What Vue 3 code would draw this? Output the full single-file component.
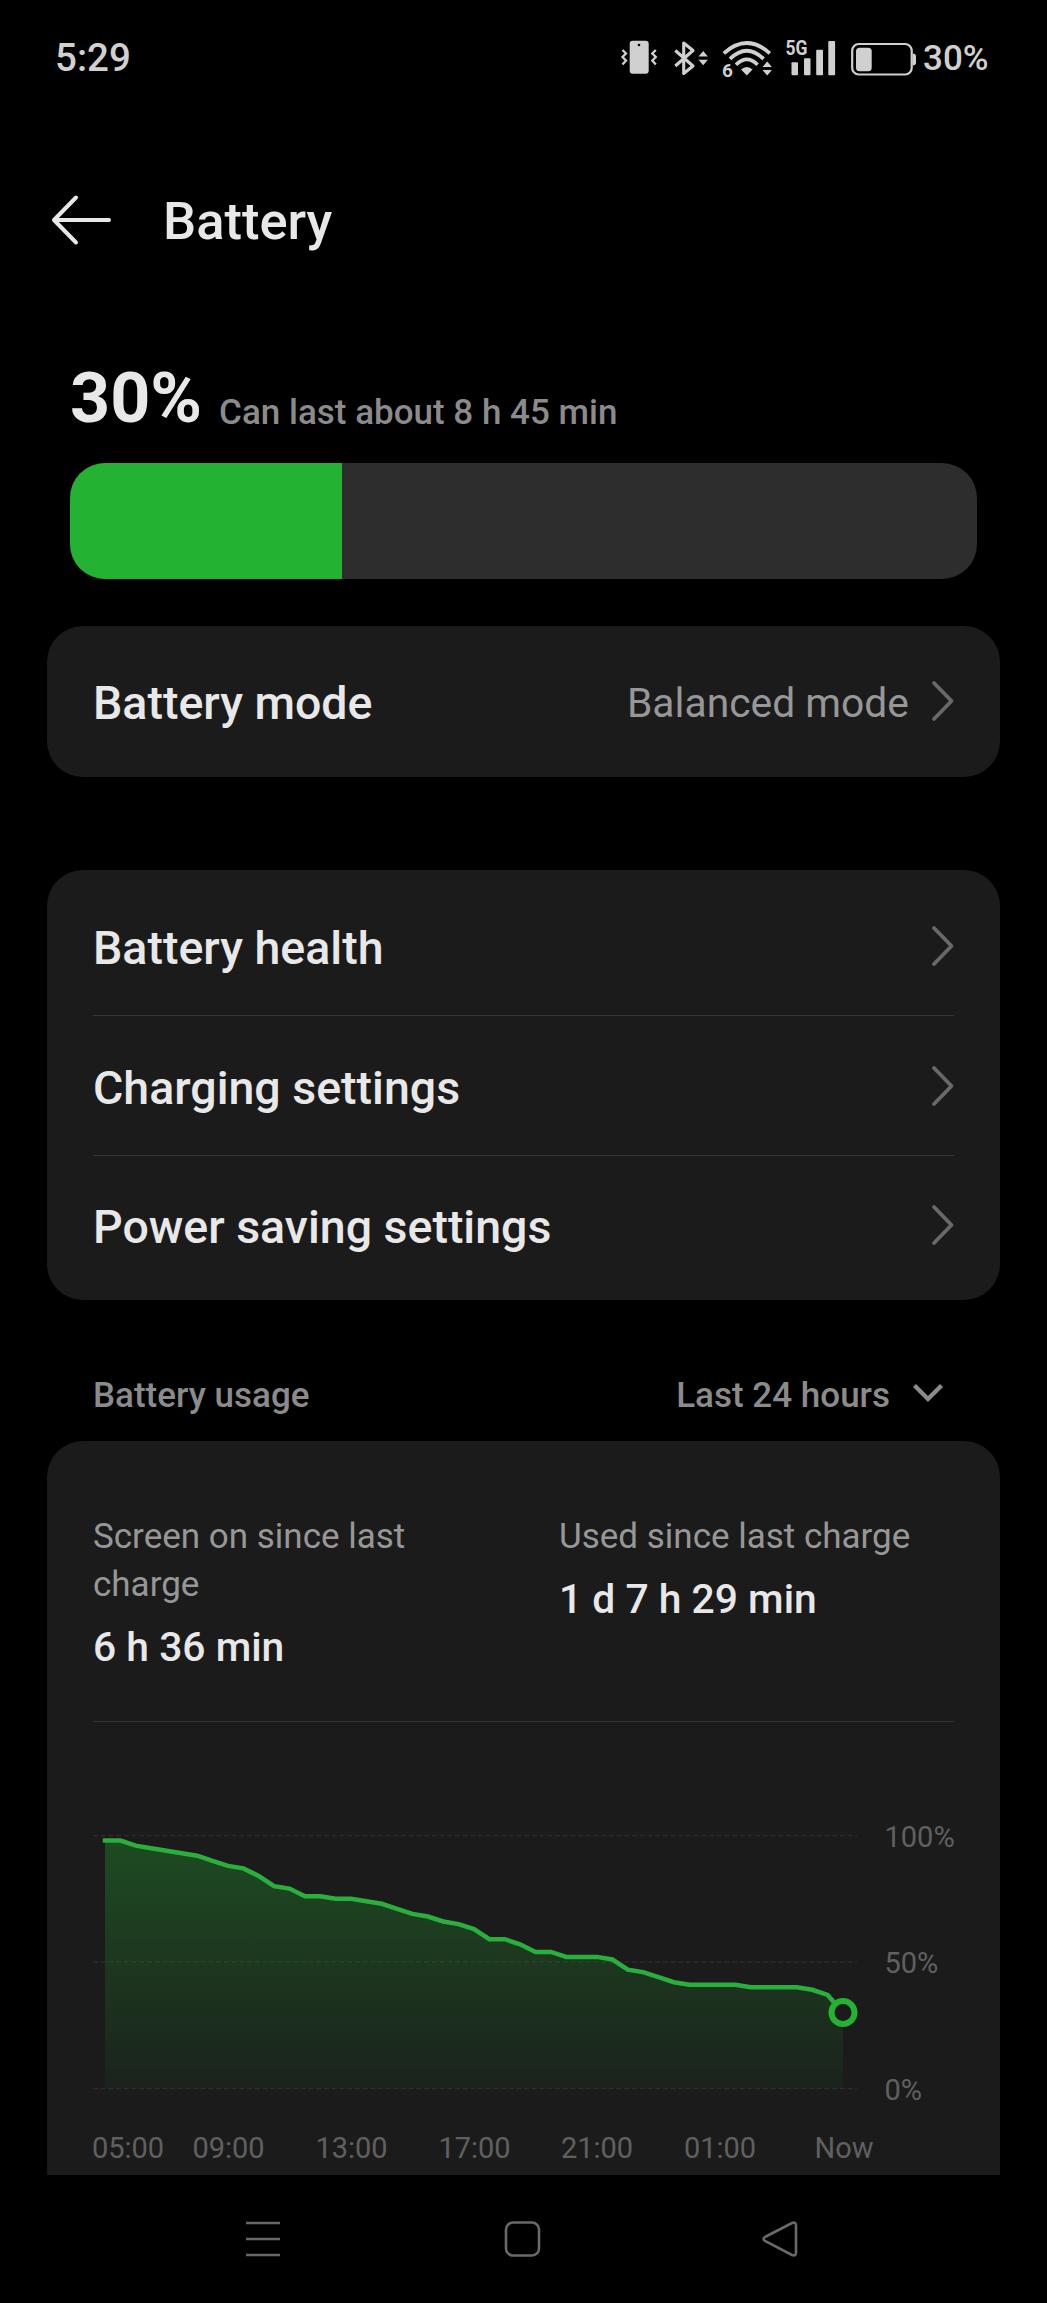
<script setup>
const level = 30;

const settings = ["Battery health", "Charging settings", "Power saving settings"];

const stats = [
  { label: "Screen on since last charge", value: "6 h 36 min" },
  { label: "Used since last charge", value: "1 d 7 h 29 min" }
];

// one reading every 30 minutes
const readings = [
  98, 98, 96, 95, 94, 93, 92, 90, 88, 87, 84, 80, 79, 76, 76, 75, 75, 74, 73, 71,
  69, 68, 66, 65, 63, 59, 59, 57, 54, 54, 52, 52, 52, 51, 47, 46, 44, 42, 41, 41,
  41, 41, 40, 40, 40, 40, 39, 37, 30
];

const chart = { left: 12, right: 750, top: 14.5, bottom: 267.5 };

const toX = (i) => chart.left + (i * (chart.right - chart.left)) / (readings.length - 1);
const toY = (v) => chart.bottom - (v * (chart.bottom - chart.top)) / 100;

const line = readings.map((v, i) => `${toX(i).toFixed(1)},${toY(v).toFixed(1)}`).join(" ");
const area = `${chart.left},${chart.bottom} ${line} ${chart.right},${chart.bottom}`;
const last = { x: toX(readings.length - 1), y: toY(readings[readings.length - 1]) };

const levels = [100, 50, 0];
const hours = [
  { text: "05:00", x: 35 },
  { text: "09:00", x: 135.5 },
  { text: "13:00", x: 258.5 },
  { text: "17:00", x: 381.5 },
  { text: "21:00", x: 504 },
  { text: "01:00", x: 627 },
  { text: "Now", x: 751 }
];
</script>

<template>
  <div class="screen">
    <div class="status-bar">
      <span class="time">5:29</span>
      <div class="status-icons">
        <svg width="39" height="40" viewBox="0 0 39 40">
          <rect x="8.7" y="2.8" width="19" height="33" rx="3" fill="#d0d0d0" />
          <circle cx="18" cy="7" r="1.3" fill="#000" />
          <path d="M1.5 12l3.5 3.5-3.5 3.5 3.5 3.5-3.5 4M34.8 12l-3.5 3.5 3.5 3.5-3.5 3.5 3.5 4" fill="none" stroke="#d0d0d0" stroke-width="2.3" />
        </svg>
        <svg width="38" height="40" viewBox="0 0 38 40">
          <path d="M3.3 12.5L21 28l-9.3 7.5V5L21 12.5 3.3 28" fill="none" stroke="#d0d0d0" stroke-width="3.1" stroke-linejoin="round" />
          <path d="M26.5 18.5l4.7-5.5 4.7 5.5zM26.5 21.7l4.7 5.5 4.7-5.5z" fill="#d0d0d0" />
        </svg>
        <svg width="52" height="40" viewBox="0 0 52 40">
          <g fill="none" stroke="#d0d0d0" stroke-width="3.7">
            <path d="M1.8 15.3Q24.8-5.3 47.8 15.3" />
            <path d="M8 20.9Q24.8 4.5 41.6 20.9" />
            <path d="M14 26.7Q24.8 16 35.6 26.7" />
          </g>
          <path d="M19 31.5q5.8-5 11.6 0l-5.8 6z" fill="#d0d0d0" />
          <path d="M40.5 29l4.7-5.5 4.7 5.5zM40.5 32l4.7 5.5 4.7-5.5z" fill="#d0d0d0" />
          <text x="0" y="38.5" class="tiny">6</text>
        </svg>
        <svg width="50" height="40" viewBox="0 0 50 40">
          <text x="-0.5" y="16.8" class="tiny generation" textLength="22" lengthAdjust="spacingAndGlyphs">5G</text>
          <g fill="#d0d0d0">
            <rect x="5.5" y="24.3" width="6.5" height="13" rx="1" />
            <rect x="18" y="20.3" width="6.5" height="17" rx="1" />
            <rect x="30.2" y="11.7" width="6.8" height="25.6" rx="1" />
            <rect x="42.3" y="3" width="6.8" height="34.3" rx="1" />
          </g>
        </svg>
        <svg width="68" height="40" viewBox="0 0 68 40">
          <rect x="4.2" y="6" width="59.5" height="30.5" rx="6.5" fill="none" stroke="#d0d0d0" stroke-width="2.2" />
          <rect x="8" y="9.8" width="15.7" height="23.5" rx="3.5" fill="#d0d0d0" />
          <path d="M64.5 15.5q3.5 0 3.5 3v6q0 3-3.5 3z" fill="#d0d0d0" />
        </svg>
        <span class="status-level">{{ level }}%</span>
      </div>
    </div>

    <header class="header">
      <svg width="62" height="52" viewBox="0 0 62 52">
        <path d="M26 2.5L4 25l22 22.5M4 25h55" fill="none" stroke="#e8e8e8" stroke-width="4" stroke-linecap="round" stroke-linejoin="round" />
      </svg>
      <h1>Battery</h1>
    </header>

    <section class="charge">
      <div class="charge-text">
        <strong>{{ level }}%</strong>
        <span>Can last about 8 h 45 min</span>
      </div>
      <div class="charge-bar">
        <div class="charge-fill" :style="{ width: level + '%' }"></div>
      </div>
    </section>

    <section class="card mode">
      <div class="row">
        <span class="row-title">Battery mode</span>
        <span class="row-value">Balanced mode</span>
        <svg class="chevron" width="23" height="42" viewBox="0 0 23 42">
          <path d="M3 3l17.5 18L3 39" />
        </svg>
      </div>
    </section>

    <section class="card list">
      <div v-for="item in settings" :key="item" class="row">
        <span class="row-title">{{ item }}</span>
        <svg class="chevron" width="23" height="42" viewBox="0 0 23 42">
          <path d="M3 3l17.5 18L3 39" />
        </svg>
      </div>
    </section>

    <div class="usage-head">
      <span>Battery usage</span>
      <span class="range">
        Last 24 hours
        <svg width="32" height="22" viewBox="0 0 32 22">
          <path d="M2.5 1.5L16 15 29.5 1.5" fill="none" stroke="#8b8b8b" stroke-width="4.3" />
        </svg>
      </span>
    </div>

    <section class="card usage">
      <div class="stats">
        <div v-for="stat in stats" :key="stat.label" class="stat">
          <p class="stat-label">{{ stat.label }}</p>
          <p class="stat-value">{{ stat.value }}</p>
        </div>
      </div>

      <svg class="chart" width="870" height="354" viewBox="0 0 870 354">
        <defs>
          <linearGradient id="fade" x1="0" y1="0" x2="0" y2="1">
            <stop offset="0" stop-color="#22b230" stop-opacity="0.32" />
            <stop offset="1" stop-color="#22b230" stop-opacity="0.05" />
          </linearGradient>
        </defs>
        <g v-for="v in levels" :key="v">
          <line x1="0" x2="764" :y1="toY(v)" :y2="toY(v)" class="grid" />
          <text x="791.5" :y="toY(v) + 11" class="axis">{{ v }}%</text>
        </g>
        <polygon :points="area" fill="url(#fade)" />
        <polyline :points="line" class="line" />
        <circle :cx="last.x" :cy="last.y" r="11.5" class="marker" />
        <text v-for="h in hours" :key="h.text" :x="h.x" y="337" class="axis" text-anchor="middle">{{ h.text }}</text>
      </svg>
    </section>

    <nav class="nav">
      <svg width="40" height="40" viewBox="0 0 40 40">
        <path d="M3 4h34M3 20h34M3 36h34" />
      </svg>
      <svg width="40" height="40" viewBox="0 0 40 40">
        <rect x="4" y="3.5" width="33" height="33" rx="7" />
      </svg>
      <svg width="40" height="40" viewBox="0 0 40 40">
        <path d="M5 18L32 4q4-1.5 4 2.5v27q0 4-4 2.5L5 22q-3-2 0-4z" />
      </svg>
    </nav>
  </div>
</template>

<style>
body {
  margin: 0;
  background: #000;
}
</style>

<style scoped>
.screen {
  display: flex;
  flex-direction: column;
  box-sizing: border-box;
  width: 1047px;
  height: 2303px;
  overflow: hidden;
  background: #000;
  color: #e8e8e8;
  font-family: Roboto, sans-serif;
}

svg {
  display: block;
  flex: none;
  overflow: visible;
}

.status-bar {
  display: flex;
  justify-content: space-between;
  align-items: center;
  height: 116px;
  padding: 0 58px 0 55px;
  color: #d0d0d0;
  font-weight: 500;
}

.time {
  font-size: 38.5px;
}

.status-icons {
  display: flex;
  align-items: center;
  gap: 12px;
}

.status-level {
  width: 66px;
  margin-left: -5px;
  padding-top: 2px;
  font-size: 35px;
  white-space: nowrap;
}

.tiny {
  fill: #d0d0d0;
  font-size: 19px;
  font-weight: 700;
}

.generation {
  font-size: 20.5px;
}

.header {
  display: flex;
  align-items: center;
  gap: 51px;
  height: 211px;
  margin-bottom: 1px;
  padding-left: 50px;
}

h1 {
  margin: 0;
  font-size: 52.5px;
  font-weight: 500;
}

.charge {
  padding: 29px 70px 0;
}

.charge-text {
  display: flex;
  align-items: flex-end;
  gap: 17px;
  height: 81px;
  margin-bottom: 25px;
}

.charge-text strong {
  font-size: 70px;
  line-height: 80px;
}

.charge-text span {
  color: #8b8b8b;
  font-size: 35px;
  font-weight: 500;
  line-height: 50px;
}

.charge-bar {
  height: 116px;
  border-radius: 35px;
  overflow: hidden;
  background: #2d2d2d;
}

.charge-fill {
  height: 100%;
  background: #23b232;
}

.card {
  margin: 0 47px;
  border-radius: 36px;
  background: #1b1b1b;
}

.mode {
  margin-top: 47px;
  padding: 6px 46px;
}

.list {
  margin-top: 93px;
  padding: 6px 46px;
}

.row {
  display: flex;
  align-items: center;
  box-sizing: border-box;
  height: 139.4px;
}

.row + .row {
  border-top: 1px solid #363636;
}

.row-title {
  flex: 1;
  padding-top: 4px;
  font-size: 46.5px;
  font-weight: 500;
}

.row-value {
  margin-right: 22px;
  padding-top: 4px;
  color: #979797;
  font-size: 40.8px;
}

.chevron {
  fill: none;
  stroke: #696969;
  stroke-width: 3.8;
  stroke-linecap: round;
  stroke-linejoin: round;
}

.usage-head {
  display: flex;
  justify-content: space-between;
  align-items: center;
  height: 78px;
  margin-top: 50px;
  padding: 6px 103px 7px 93px;
  color: #8b8b8b;
  font-size: 35px;
  font-weight: 500;
}

.range {
  display: flex;
  align-items: center;
  gap: 22px;
}

.usage {
  display: flex;
  flex-direction: column;
  flex: 1;
  border-radius: 36px 36px 0 0;
  padding: 0 46px;
}

.stats {
  display: flex;
  gap: 106px;
  box-sizing: border-box;
  height: 281px;
  padding-top: 71.5px;
  border-bottom: 1px solid #363636;
}

.stat {
  width: 360px;
}

.stat-label {
  margin: 0;
  color: #979797;
  font-size: 35px;
  line-height: 48px;
}

.stat-value {
  margin: 10.5px 0 0;
  font-size: 40.8px;
  font-weight: 500;
  line-height: 56px;
}

.chart {
  margin-top: 99px;
}

.grid {
  stroke: #2b2b2b;
  stroke-width: 1.5;
  stroke-dasharray: 5 2.7;
}

.axis {
  fill: #606060;
  font-size: 29px;
}

.line {
  fill: none;
  stroke: #2aae3c;
  stroke-width: 4.5;
  stroke-linecap: square;
}

.marker {
  fill: #1b1b1b;
  stroke: #23b232;
  stroke-width: 6;
}

.nav {
  display: flex;
  justify-content: space-between;
  align-items: center;
  height: 128px;
  padding: 0 247px 0 243px;
}

.nav svg {
  fill: none;
  stroke: #696969;
  stroke-width: 2.6;
}
</style>
